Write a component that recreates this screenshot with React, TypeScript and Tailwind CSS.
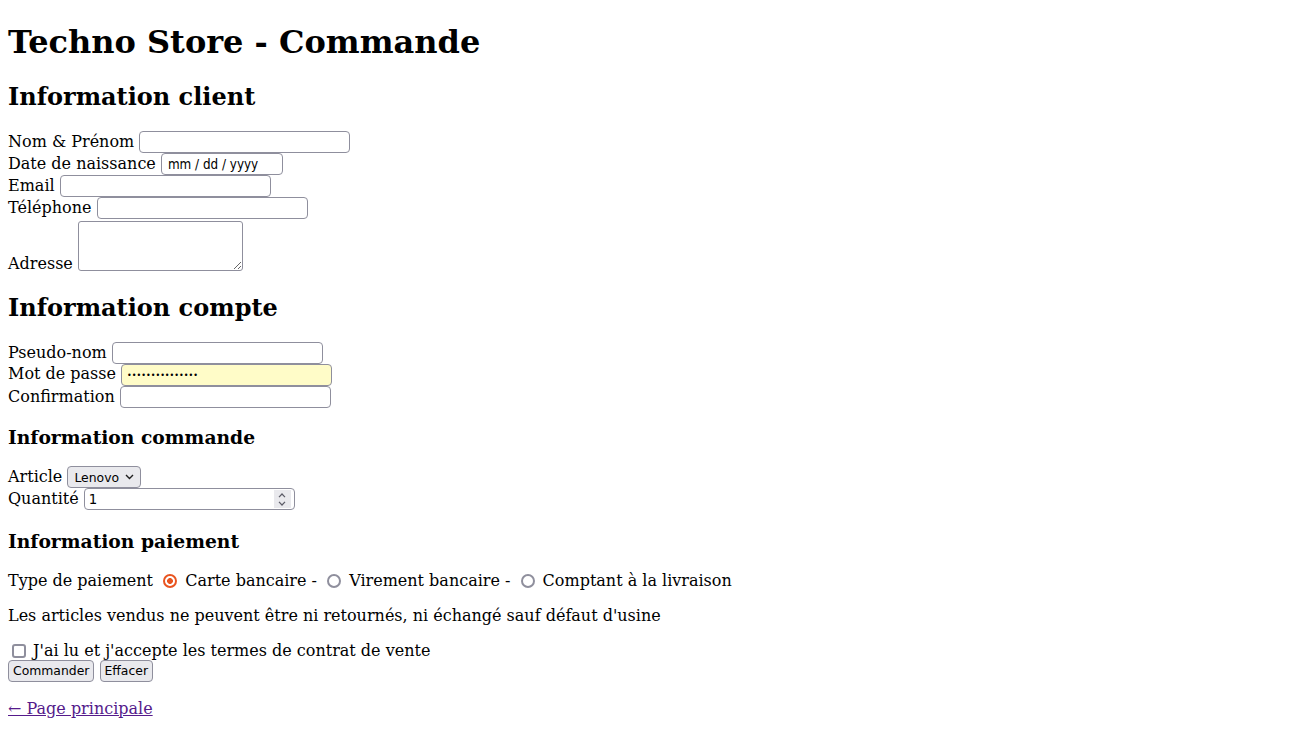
import React from "react";

const sans = "font-['DejaVu_Sans',sans-serif] text-[13.33px] leading-[normal]";
const field = `inline-block h-[22px] w-[211px] rounded-[4px] border border-[#8f8f9d] bg-white px-[4px] align-baseline text-black ${sans}`;
const button = `inline-flex h-[22px] items-center rounded-[4px] border border-[#8f8f9d] bg-[#e9e9ed] px-[4px] align-baseline text-black font-['DejaVu_Sans',sans-serif] text-[12.4px] leading-[normal]`;

function Radio({ checked }: { checked?: boolean }) {
  return (
    <span
      className={
        checked
          ? "mb-[-2px] ml-[5px] mr-[3px] inline-block h-[14px] w-[14px] rounded-full border-2 border-[#e95420] bg-[radial-gradient(circle,#e95420_2.6px,white_3.2px)] align-baseline"
          : "mb-[-2px] ml-[5px] mr-[3px] inline-block h-[14px] w-[14px] rounded-full border-2 border-[#8f8f9d] bg-white align-baseline"
      }
    />
  );
}

function Chevron({ up }: { up?: boolean }) {
  return (
    <svg width="8" height="5" viewBox="0 0 8 5" className="block">
      <path
        d={up ? "M1 4.2 L4 1 L7 4.2" : "M1 0.8 L4 4 L7 0.8"}
        fill="none"
        stroke="#5b5b66"
        strokeWidth="1.2"
      />
    </svg>
  );
}

export default function App() {
  return (
    <div className="m-2 font-['DejaVu_Serif',serif] text-base leading-[normal] text-black">
      <h1 className="mb-[21.44px] mt-[22.5px] text-[32px] font-bold leading-[normal]">Techno Store - Commande</h1>

      <form onSubmit={(e) => e.preventDefault()}>
        <h2 className="mb-[20.5px] mt-[21px] text-[24px] font-bold leading-[normal]">Information client</h2>
        <label>Nom &amp; Prénom</label> <input type="text" className={field} /><br />
        <label>Date de naissance</label>{" "}
        <span className={`${field} !w-[122px] !px-[6px] inline-flex items-center font-['DejaVu_Sans_Condensed','DejaVu_Sans',sans-serif]`}>
          mm / dd / yyyy
        </span>
        <br />
        <label>Email</label> <input type="email" className={field} /><br />
        <label>Téléphone</label> <input type="tel" className={field} /><br />
        <label>Adresse</label>{" "}
        <textarea className="mb-[-2px] mt-[2px] inline-block h-[50px] w-[165px] resize rounded-[3px] border border-[#8f8f9d] bg-white align-baseline" />

        <h2 className="my-[19.92px] text-[24px] font-bold leading-[normal]">Information compte</h2>
        <label>Pseudo-nom</label> <input type="text" className={field} /><br />
        <label>Mot de passe</label>{" "}
        <span className={`${field} !bg-[#fffcc8] !px-[5px] !leading-[20px]`}>
          <span className="align-[1px] text-[8px]">•••••••••••••••</span>
        </span>
        <br />
        <label>Confirmation</label> <input type="password" className={field} />

        <h3 className="mb-[18.72px] mt-[17.5px] text-[18.72px] font-bold leading-[normal]">Information commande</h3>
        <label>Article</label>{" "}
        <span className={`${button} gap-[6px] !px-[6px]`}>
          Lenovo
          <svg width="9" height="6" viewBox="0 0 9 6">
            <path d="M1 1 L4.5 4.5 L8 1" fill="none" stroke="#1f1f1f" strokeWidth="1.4" />
          </svg>
        </span>
        <br />
        <label>Quantité</label>{" "}
        <span className={`${field} inline-flex items-center justify-between !pr-[3px]`}>
          <span>1</span>
          <span className="flex h-[18px] w-[17px] flex-col items-center justify-center gap-[3px] bg-[#e9e9ed]">
            <Chevron up />
            <Chevron />
          </span>
        </span>

        <h3 className="mb-[18.72px] mt-[19.5px] text-[18.72px] font-bold leading-[normal]">Information paiement</h3>
        <p className="my-4">
          Type de paiement <Radio checked /> Carte bancaire - <Radio /> Virement bancaire - <Radio /> Comptant à la livraison
        </p>
        <p className="my-4">Les articles vendus ne peuvent être ni retournés, ni échangé sauf défaut d'usine</p>
        <p className="mb-[17px] mt-4">
          <span className="mb-[-2px] ml-[4px] mr-[2px] inline-block h-[14px] w-[14px] rounded-[3px] border-2 border-[#8f8f9d] bg-white align-baseline" />{" "}
          J'ai lu et j'accepte les termes de contrat de vente
          <br />
          <button type="submit" className={button}>Commander</button>{" "}
          <button type="reset" className={button}>Effacer</button>
        </p>
      </form>

      <p className="my-4">
        <a href="#" className="text-[#551a8b] underline">← Page principale</a>
      </p>
    </div>
  );
}
